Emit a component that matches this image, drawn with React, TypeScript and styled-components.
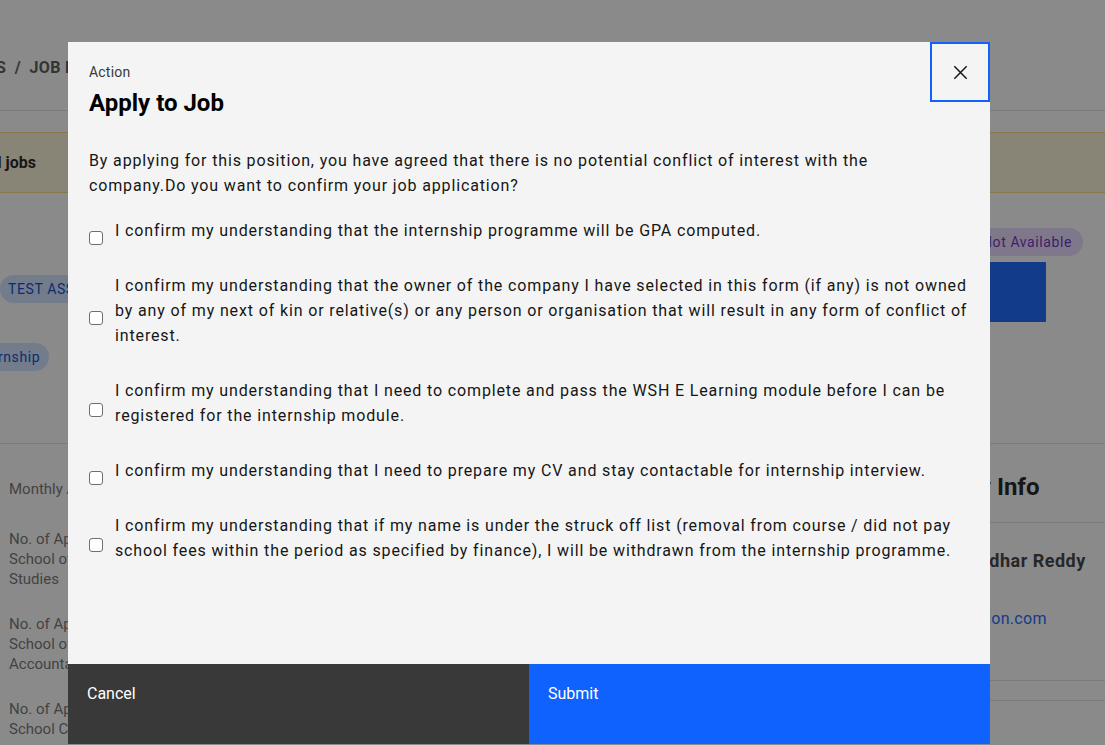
import styled, { createGlobalStyle } from 'styled-components'

const GlobalStyle = createGlobalStyle`
	html, body {
		margin: 0;
		padding: 0;
		overflow: hidden;
	}
	body {
		font-family: Roboto, "Liberation Sans", Arial, sans-serif;
		color: #161616;
		background: #ffffff;
	}
	* {
		box-sizing: border-box;
	}
`

/* ---------- page under the dialog ---------- */

const Page = styled.div`
	width: 1105px;
	height: 745px;
	overflow: hidden;
	background: #ffffff;
`

const TopBar = styled.div`
	height: 111px;
	padding-top: 58px;
	border-bottom: 1px solid #e0e0e0;
`

const Breadcrumb = styled.div`
	margin-left: -35px;
	font-size: 16px;
	line-height: 20px;
	font-weight: 700;
	color: #525252;
	white-space: nowrap;
	letter-spacing: 0.3px;
`

const Banner = styled.div`
	margin-top: 21px;
	height: 61px;
	display: flex;
	align-items: center;
	background: #fcf4d6;
	border-top: 1px solid rgba(241, 194, 27, 0.5);
	border-bottom: 1px solid rgba(241, 194, 27, 0.5);
`

const BannerText = styled.div`
	margin-left: -53px;
	font-size: 16px;
	font-weight: 700;
	white-space: nowrap;
`

const Summary = styled.div`
	height: 251px;
	display: flex;
	justify-content: space-between;
	border-bottom: 1px solid #e0e0e0;
`

const TagColumn = styled.div`
	padding-top: 82px;
	display: flex;
	flex-direction: column;
	align-items: flex-start;
	gap: 40px;
`

const Tag = styled.span<{ $tone: 'blue' | 'purple'; $shift?: number }>`
	display: inline-flex;
	align-items: center;
	height: 28px;
	padding: 0 ${(p) => (p.$tone === 'purple' ? 11 : 9)}px 0 8px;
	border-radius: 14px;
	font-size: 14px;
	letter-spacing: 0.6px;
	white-space: nowrap;
	margin-left: ${(p) => p.$shift ?? 0}px;
	background: ${(p) => (p.$tone === 'blue' ? '#d0e2ff' : '#e8daff')};
	color: ${(p) => (p.$tone === 'blue' ? '#0043ce' : '#6929c4')};
`

const ActionColumn = styled.div`
	width: 240px;
	margin-right: 22px;
	padding-top: 35px;
	display: flex;
	flex-direction: column;
	align-items: flex-end;
	gap: 6px;
`

const ApplyButton = styled.div`
	align-self: flex-start;
	width: 203px;
	height: 60px;
	background: #0f62fe;
`

const Details = styled.div`
	display: grid;
	grid-template-columns: 150px 1fr 232px;
`

const LabelList = styled.div`
	padding: 35px 0 0 9px;
	display: flex;
	flex-direction: column;
	gap: 25px;
`

const FieldLabel = styled.div<{ $after?: number }>`
	width: 140px;
	font-size: 15px;
	line-height: 20px;
	color: #6f6f6f;
	margin-bottom: ${(p) => p.$after ?? 0}px;
`

const Sidebar = styled.div`
	display: flex;
	flex-direction: column;
`

const SidebarTitle = styled.div`
	padding: 28px 16px 20px;
	font-size: 24px;
	line-height: 30px;
	font-weight: 700;
	border-bottom: 1px solid #e0e0e0;
	white-space: nowrap;
`

const ContactBlock = styled.div`
	padding: 26px 16px 0;
	height: 158px;
	border-bottom: 1px solid #e0e0e0;
	display: flex;
	flex-direction: column;
	gap: 35px;
`

const ContactName = styled.div`
	font-size: 18px;
	line-height: 24px;
	font-weight: 700;
	letter-spacing: 0.5px;
	color: #393939;
	white-space: nowrap;
`

const ContactMail = styled.div`
	font-size: 16px;
	line-height: 22px;
	letter-spacing: 0.3px;
	color: #0f62fe;
	white-space: nowrap;
`

const Spacer = styled.div`
	height: 20px;
	border-bottom: 1px solid #e0e0e0;
`

/* ---------- dialog ---------- */

const Overlay = styled.div`
	position: fixed;
	inset: 0;
	background: rgba(22, 22, 22, 0.5);
	display: flex;
	padding: 42px 115px 1px 68px;
`

const Dialog = styled.div`
	flex: 1;
	display: flex;
	flex-direction: column;
	background: #f4f4f4;
`

const DialogHeader = styled.div`
	display: flex;
	justify-content: space-between;
	align-items: flex-start;
`

const HeaderText = styled.div`
	padding: 21px 0 0 21px;
	display: flex;
	flex-direction: column;
	gap: 7px;
`

const Eyebrow = styled.div`
	font-size: 14px;
	line-height: 18px;
	letter-spacing: 0.2px;
	color: #393939;
`

const Title = styled.h2`
	margin: 0;
	font-size: 24px;
	line-height: 30px;
	font-weight: 700;
	color: #000000;
`

const CloseButton = styled.button`
	width: 60px;
	height: 60px;
	display: flex;
	align-items: center;
	justify-content: center;
	background: transparent;
	border: 2px solid #0f62fe;
	padding: 0;
	cursor: pointer;
`

const DialogBody = styled.div`
	padding: 30px 12px 0 21px;
	display: flex;
	flex-direction: column;
	gap: 20px;
	font-size: 16px;
	line-height: 25px;
	letter-spacing: 0.86px;
`

const Intro = styled.p`
	margin: 0 10px 0 0;
`

const CheckList = styled.div`
	display: flex;
	flex-direction: column;
	gap: 30px;
`

const CheckRow = styled.label`
	display: flex;
	align-items: center;
	gap: 12px;
	cursor: pointer;
`

const Box = styled.input`
	appearance: none;
	flex: none;
	width: 14px;
	height: 14px;
	margin: 12px 0 -2px;
	border: 1px solid #6f6f6f;
	border-radius: 3px;
	background: #ffffff;
`

const CheckText = styled.span``

const Footer = styled.div`
	margin-top: auto;
	height: 80px;
	display: grid;
	grid-template-columns: 1fr 1fr;
`

const FooterButton = styled.button<{ $primary?: boolean }>`
	border: none;
	text-align: left;
	display: flex;
	align-items: flex-start;
	padding: 21px 19px;
	font-family: Roboto, "Liberation Sans", Arial, sans-serif;
	font-size: 16px;
	line-height: 18px;
	color: #ffffff;
	background: ${(p) => (p.$primary ? '#0f62fe' : '#393939')};
	cursor: pointer;
`

const statements = [
	'I confirm my understanding that the internship programme will be GPA computed.',
	'I confirm my understanding that the owner of the company I have selected in this form (if any) is not owned by any of my next of kin or relative(s) or any person or organisation that will result in any form of conflict of interest.',
	'I confirm my understanding that I need to complete and pass the WSH E Learning module before I can be registered for the internship module.',
	'I confirm my understanding that I need to prepare my CV and stay contactable for internship interview.',
	'I confirm my understanding that if my name is under the struck off list (removal from course / did not pay school fees within the period as specified by finance), I will be withdrawn from the internship programme.',
]

function CloseIcon() {
	return (
		<svg width="17" height="17" viewBox="0 0 16 16" fill="none">
			<path d="M2.2 2.2L13.8 13.8M13.8 2.2L2.2 13.8" stroke="#161616" strokeWidth="1.4" />
		</svg>
	)
}

export default function App() {
	return (
		<>
			<GlobalStyle />
			<Page>
				<TopBar>
					<Breadcrumb>JOBS&nbsp;&nbsp;/&nbsp;&nbsp;JOB DETAILS</Breadcrumb>
				</TopBar>
				<Banner>
					<BannerText>Applied jobs</BannerText>
				</Banner>
				<Summary>
					<TagColumn>
						<Tag $tone="blue">TEST ASSESSMENT</Tag>
						<Tag $tone="blue" $shift={-36}>Internship</Tag>
					</TagColumn>
					<ActionColumn>
						<Tag $tone="purple">Not Available</Tag>
						<ApplyButton />
					</ActionColumn>
				</Summary>
				<Details>
					<LabelList>
						<FieldLabel $after={5}>Monthly Allowance</FieldLabel>
						<FieldLabel>No. of Applicants School of Business Studies</FieldLabel>
						<FieldLabel>No. of Applicants School of Accountancy</FieldLabel>
						<FieldLabel>No. of Applicants School Count</FieldLabel>
					</LabelList>
					<div />
					<Sidebar>
						<SidebarTitle>Company Info</SidebarTitle>
						<ContactBlock>
							<ContactName>Mr. K. V. Sridhar Reddy</ContactName>
							<ContactMail>hr@nextsolution.com</ContactMail>
						</ContactBlock>
						<Spacer />
					</Sidebar>
				</Details>
			</Page>

			<Overlay>
				<Dialog role="dialog" aria-modal="true">
					<DialogHeader>
						<HeaderText>
							<Eyebrow>Action</Eyebrow>
							<Title>Apply to Job</Title>
						</HeaderText>
						<CloseButton aria-label="Close">
							<CloseIcon />
						</CloseButton>
					</DialogHeader>
					<DialogBody>
						<Intro>
							By applying for this position, you have agreed that there is no potential conflict of interest with the
							company.Do you want to confirm your job application?
						</Intro>
						<CheckList>
							{statements.map((s) => (
								<CheckRow key={s}>
									<Box type="checkbox" />
									<CheckText>{s}</CheckText>
								</CheckRow>
							))}
						</CheckList>
					</DialogBody>
					<Footer>
						<FooterButton>Cancel</FooterButton>
						<FooterButton $primary>Submit</FooterButton>
					</Footer>
				</Dialog>
			</Overlay>
		</>
	)
}
